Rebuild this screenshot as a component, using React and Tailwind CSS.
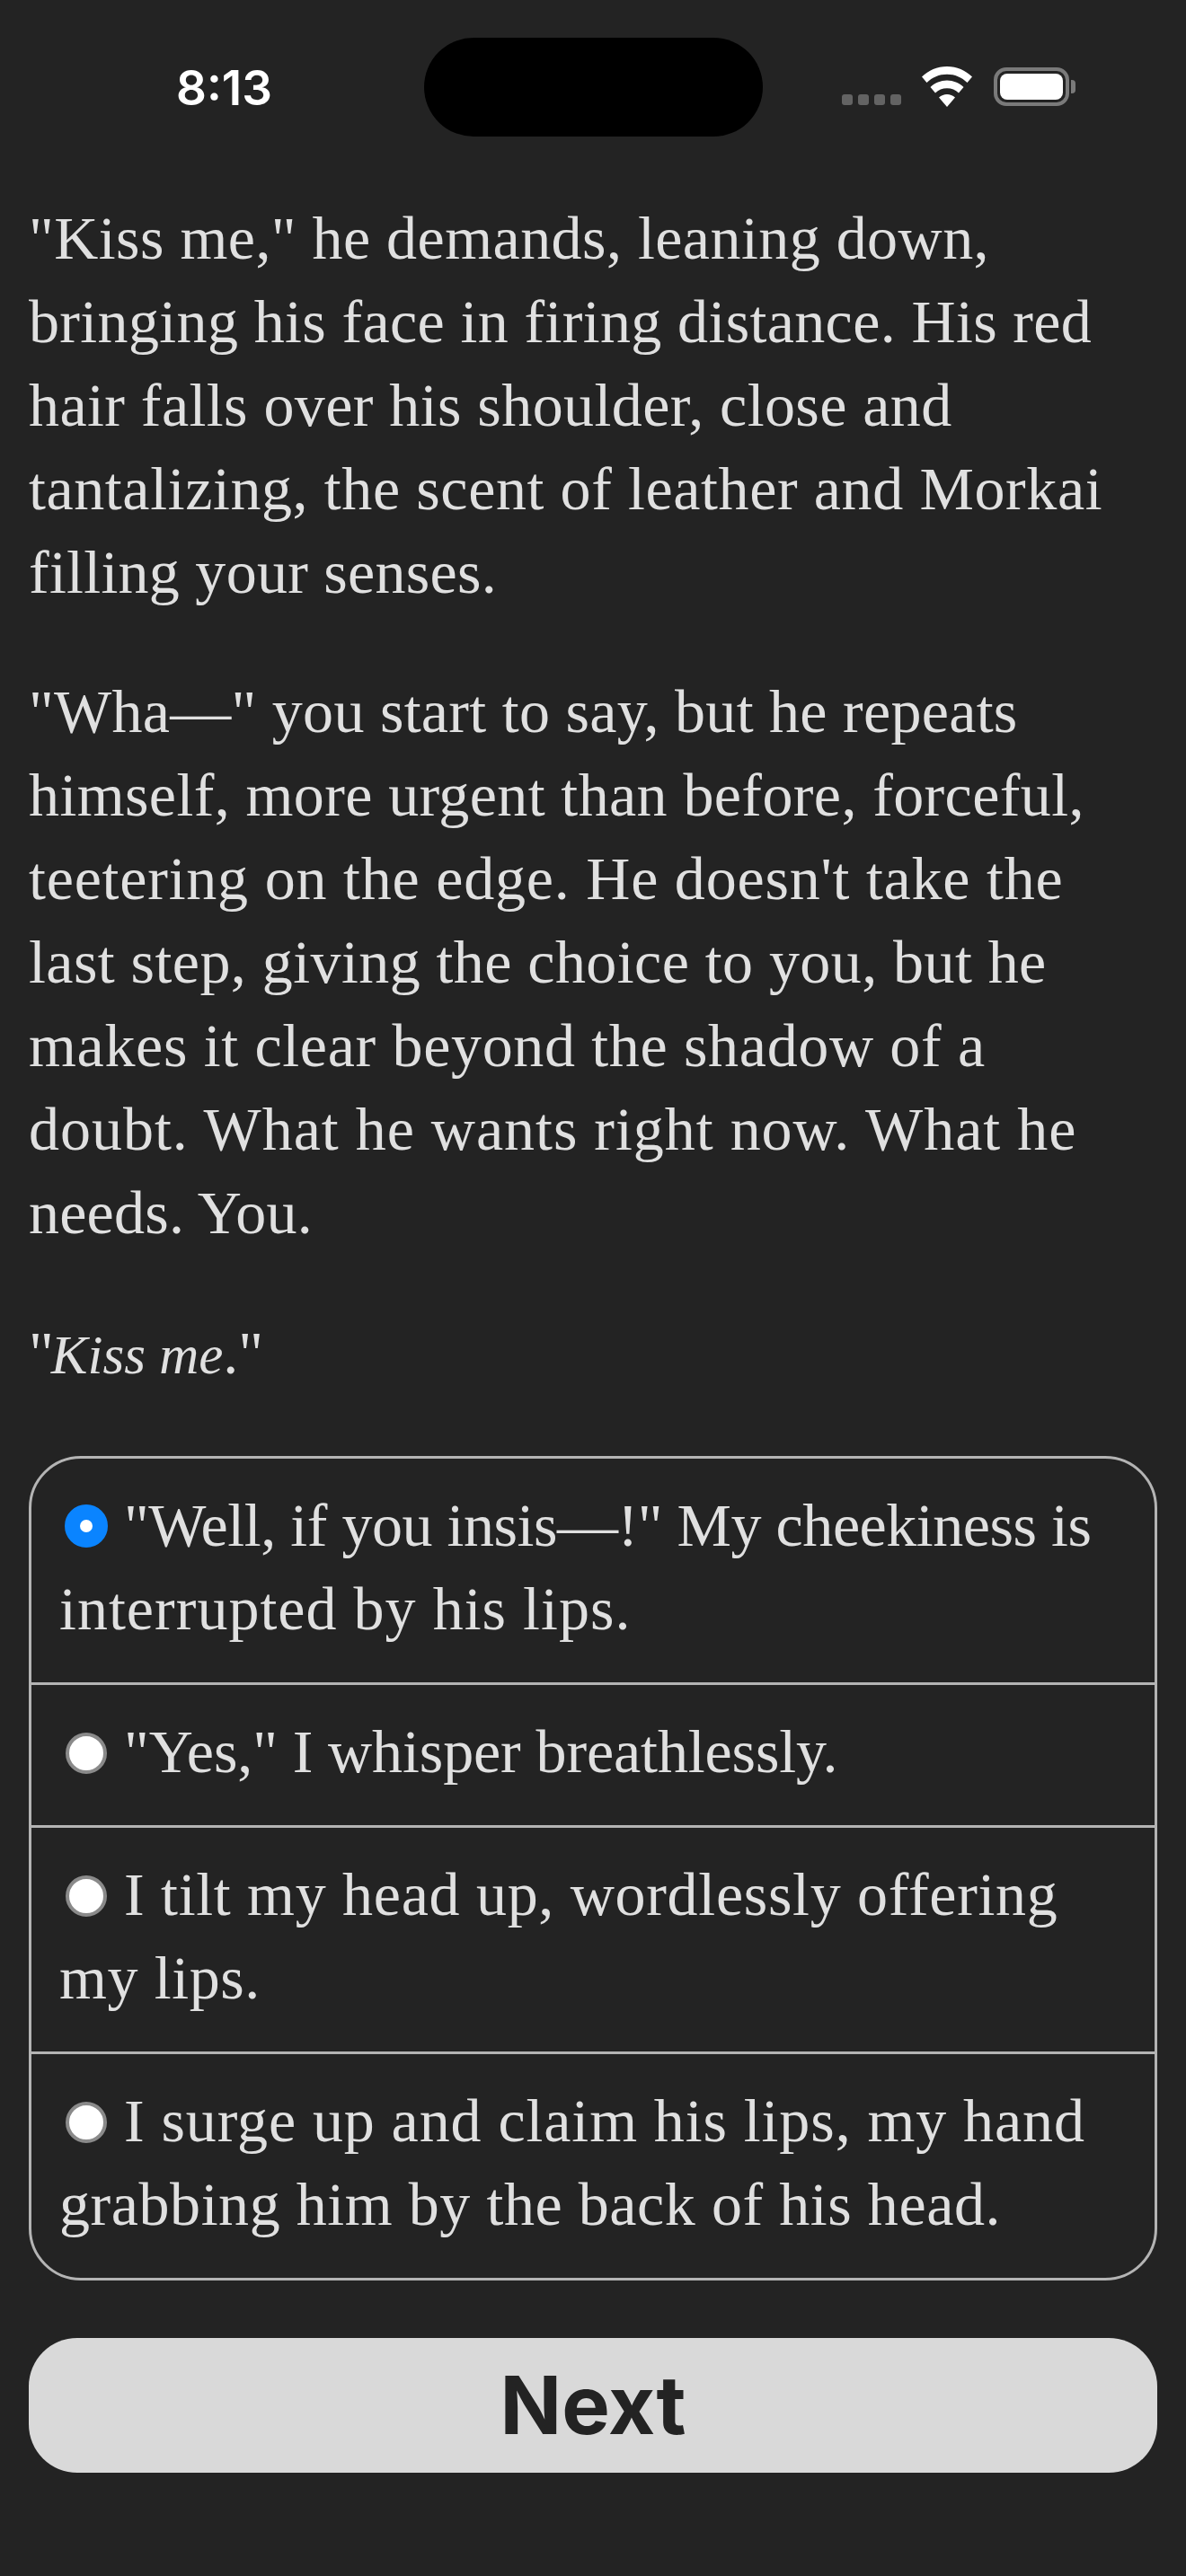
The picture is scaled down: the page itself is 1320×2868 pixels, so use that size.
const serif = "font-['Liberation_Serif',serif]";
const body = "text-[68px] leading-[93px] text-[#e0e0e0] whitespace-nowrap";

function StatusBar() {
  return (
    <div className="relative h-[152px]">
      <span className="absolute left-[196px] top-[72px] font-['Inter',sans-serif] font-semibold text-[53px] leading-none text-white">8:13</span>
      <div className="absolute left-[472px] top-[42px] w-[377px] h-[110px] rounded-[55px] bg-black" />
      <div className="absolute left-[937px] top-[105px] flex gap-[6px]">
        {[0, 1, 2, 3].map((i) => (
          <span key={i} className="w-[12px] h-[12px] rounded-[3px] bg-[#636363]" />
        ))}
      </div>
      <svg className="absolute left-[1025px] top-[74px]" width="58" height="46" viewBox="0 0 58 46">
        <path d="M29 0C18 0 8.500 4.300 1 11.500L6.500 18C12.500 12 20.300 8.700 29 8.700S45.500 12 51.500 18L57 11.500C49.500 4.300 40 0 29 0Z" fill="#fff" />
        <path d="M29 15.500C22 15.500 15.500 18.300 10.500 23L16 29.500C19.500 26.200 24 24.300 29 24.300S38.500 26.200 42 29.500L47.500 23C42.500 18.300 36 15.500 29 15.500Z" fill="#fff" />
        <path d="M29 31C25.700 31 22.500 32.200 20 34.500L29 45L38 34.500C35.500 32.200 32.300 31 29 31Z" fill="#fff" />
      </svg>
      <div className="absolute left-[1106px] top-[75px] w-[84px] h-[43px] rounded-[14px] border-[4px] border-[#7a7a7a] p-[3px]">
        <div className="w-full h-full rounded-[8px] bg-white" />
      </div>
      <div className="absolute left-[1192px] top-[89px] w-[5px] h-[15px] rounded-r-[4px] bg-[#7a7a7a]" />
    </div>
  );
}

function Radio({ selected }) {
  return selected ? (
    <span className="inline-block align-[-2px] w-[48px] h-[48px] ml-[6px] mr-[18px] rounded-full border-[17px] border-[#0a84ff] bg-white" />
  ) : (
    <span className="inline-block align-[-2px] w-[46px] h-[46px] ml-[7px] mr-[19px] rounded-full border-[4px] border-[#8a8a8a] bg-white" />
  );
}

function Option({ selected, last, first, second }) {
  return (
    <div className={`px-[31px] pt-[28px] pb-[35px] ${last ? "" : "border-b-[3px] border-[#b4b4b4]"}`}>
      <p className={body}>
        <span className={`block ${first.track}`}>
          <Radio selected={selected} />
          {first.text}
        </span>
        {second && <span className={`block ${second.track}`}>{second.text}</span>}
      </p>
    </div>
  );
}

export default function App() {
  return (
    <div className={`w-[1320px] h-[2868px] overflow-hidden bg-[#232323] ${serif}`}>
      <StatusBar />
      <div className="px-[32px] pt-[67px]">
        <p className={body}>
          <span className="block tracking-[0.455px]">"Kiss me," he demands, leaning down,</span>
          <span className="block tracking-[0.36px]">bringing his face in firing distance. His red</span>
          <span className="block tracking-[0.42px]">hair falls over his shoulder, close and</span>
          <span className="block tracking-[0.6px]">tantalizing, the scent of leather and Morkai</span>
          <span className="block tracking-[0.27px]">filling your senses.</span>
        </p>
        <p className={`mt-[62px] ${body}`}>
          <span className="block tracking-[0.28px]">"Wha—" you start to say, but he repeats</span>
          <span className="block tracking-[0.39px]">himself, more urgent than before, forceful,</span>
          <span className="block tracking-[0.78px]">teetering on the edge. He doesn't take the</span>
          <span className="block tracking-[0.43px]">last step, giving the choice to you, but he</span>
          <span className="block tracking-[0.66px]">makes it clear beyond the shadow of a</span>
          <span className="block tracking-[0.98px]">doubt. What he wants right now. What he</span>
          <span className="block tracking-[0.22px]">needs. You.</span>
        </p>
        <p className={`mt-[63px] ${body}`}>
          "<em className="ml-[-3px] text-[61px] tracking-[0px]">Kiss me</em>."
        </p>
        <div className="mt-[66px] rounded-[58px] border-[3px] border-[#b4b4b4]">
          <Option
            selected
            first={{ text: '"Well, if you insis—!" My cheekiness is', track: "tracking-[-0.46px]" }}
            second={{ text: "interrupted by his lips.", track: "tracking-[1.02px]" }}
          />
          <Option first={{ text: '"Yes," I whisper breathlessly.', track: "tracking-[-0.11px]" }} />
          <Option
            first={{ text: "I tilt my head up, wordlessly offering", track: "tracking-[0.7px]" }}
            second={{ text: "my lips.", track: "tracking-[0.6px]" }}
          />
          <Option
            last
            first={{ text: "I surge up and claim his lips, my hand", track: "tracking-[0.9px]" }}
            second={{ text: "grabbing him by the back of his head.", track: "tracking-[0.56px]" }}
          />
        </div>
        <button className="mt-[64px] w-full h-[150px] rounded-[54px] bg-[#d9d9d9] font-['Inter',sans-serif] font-bold text-[90px] leading-none text-[#232323]">
          Next
        </button>
      </div>
    </div>
  );
}
